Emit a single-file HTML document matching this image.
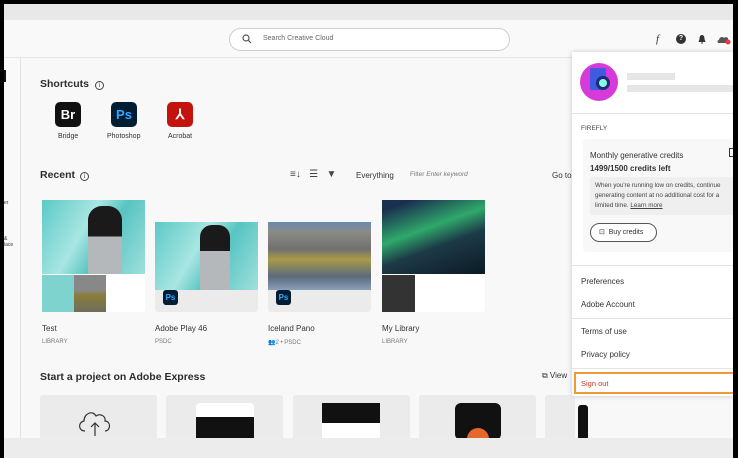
<!DOCTYPE html>
<html><head><meta charset="utf-8"><style>
*{margin:0;padding:0;box-sizing:border-box}
body{width:738px;height:458px;overflow:hidden;background:#000;font-family:"Liberation Sans",sans-serif;position:relative;color:#2c2c2c}
.abs{position:absolute}
.t{font-size:8px;color:#333}
.s{font-size:6px;color:#777}
.h{font-size:10.5px;font-weight:bold;color:#2c2c2c}
.ic{width:26px;height:25px;border-radius:5px;color:#fff;font-weight:bold;font-size:13px;text-align:center;line-height:25px}
.card{background:#ebebeb;border-radius:3px}
.menu{font-size:8px;color:#333}
</style></head><body>
<div class="abs" style="left:4px;top:4px;width:729px;height:454px;background:#f8f8f8"></div>
<div class="abs" style="left:4px;top:4px;width:729px;height:16px;background:#e8e8e8"></div>
<div class="abs" style="left:4px;top:20px;width:729px;height:38px;background:#f9f9f9;border-bottom:1px solid #e6e6e6"></div>
<div class="abs" style="left:4px;top:58px;width:17px;height:380px;background:#f9f9f9;border-right:1px solid #e3e3e3"></div>
<div class="abs" style="left:4px;top:70px;width:2px;height:12px;background:#111"></div>
<div class="abs" style="left:4px;top:200px;font-size:5px;color:#333">er</div>
<div class="abs" style="left:4px;top:236px;font-size:5px;color:#333">&amp;<br>lace</div>
<!-- search -->
<div class="abs" style="left:229px;top:28px;width:281px;height:23px;border:1px solid #cfcfcf;border-radius:12px;background:#fff"></div>
<svg class="abs" style="left:242px;top:34px" width="10" height="10"><circle cx="4" cy="4" r="3" stroke="#555" fill="none" stroke-width="1.2"/><line x1="6.3" y1="6.3" x2="9" y2="9" stroke="#555" stroke-width="1.2"/></svg>
<div class="abs" style="left:263px;top:35px;font-size:7px;color:#666">Search Creative Cloud</div>
<!-- top right icons -->
<div class="abs" style="left:656px;top:33px;font-size:11px;font-style:italic;font-family:'Liberation Serif',serif;color:#333">f</div>
<div class="abs" style="left:676px;top:34px;width:10px;height:10px;border-radius:50%;background:#333;color:#fff;font-size:7px;font-weight:bold;text-align:center;line-height:10px">?</div>
<svg class="abs" style="left:697px;top:34px" width="10" height="10"><path d="M5 1C3 1 2.5 3 2.5 5L1.5 8H8.5L7.5 5C7.5 3 7 1 5 1Z M4 8.5h2v1h-2z" fill="#333"/></svg>
<svg class="abs" style="left:716px;top:33px" width="16" height="12"><path d="M3 10C1 10 1 7 3 7C3 4 7 3 8 5C10 3 13 5 12 7C14 7 14 10 12 10Z" fill="#555"/><circle cx="12" cy="9" r="2.5" fill="#e34"/></svg>
<!-- shortcuts -->
<div class="abs h" style="left:40px;top:78px">Shortcuts <span style="font-weight:normal;border:1px solid #444;border-radius:50%;font-size:6px;display:inline-block;width:9px;height:9px;text-align:center;line-height:8px;margin-left:3px">i</span></div>
<div class="abs ic" style="left:55px;top:102px;background:#111">Br</div>
<div class="abs ic" style="left:111px;top:102px;background:#001d34;color:#31a8ff">Ps</div>
<div class="abs ic" style="left:167px;top:102px;background:#c4120c;font-size:14px">⅄</div>
<div class="abs t" style="left:58px;top:133px;font-size:7px">Bridge</div>
<div class="abs t" style="left:107px;top:133px;font-size:7px">Photoshop</div>
<div class="abs t" style="left:168px;top:133px;font-size:7px">Acrobat</div>
<!-- recent -->
<div class="abs h" style="left:40px;top:169px">Recent <span style="font-weight:normal;border:1px solid #444;border-radius:50%;font-size:6px;display:inline-block;width:9px;height:9px;text-align:center;line-height:8px;margin-left:2px">i</span></div>
<div class="abs" style="left:290px;top:169px;font-size:10px;color:#444">≡↓&nbsp;&nbsp;&nbsp;☰&nbsp;&nbsp;&nbsp;▼</div>
<div class="abs t" style="left:356px;top:171px">Everything</div>
<div class="abs" style="left:410px;top:171px;font-size:6.5px;color:#777">Filter <i>Enter keyword</i></div>
<div class="abs t" style="left:552px;top:171px">Go to</div>
<!-- cards -->
<div class="abs card" style="left:42px;top:200px;width:103px;height:112px;background:#fff"></div>
<div class="abs" style="left:42px;top:200px;width:103px;height:74px;background:linear-gradient(120deg,#5cc9c6,#a8e6e2 40%,#58c4c2 60%,#9fe0dc)"></div>
<div class="abs" style="left:88px;top:206px;width:34px;height:68px;border-radius:14px 14px 2px 2px;background:linear-gradient(#1a1a1a 45%,#b5b8bb 45%)"></div>
<div class="abs" style="left:42px;top:275px;width:32px;height:37px;background:#7fd3cf"></div>
<div class="abs" style="left:74px;top:275px;width:32px;height:37px;background:linear-gradient(#888 40%,#8a7d3a 55%,#6e6e5e)"></div>
<div class="abs card" style="left:155px;top:222px;width:103px;height:90px"></div>
<div class="abs" style="left:155px;top:222px;width:103px;height:68px;background:linear-gradient(120deg,#5cc9c6,#a8e6e2 40%,#58c4c2 60%,#9fe0dc)"></div>
<div class="abs" style="left:200px;top:225px;width:30px;height:65px;border-radius:12px 12px 2px 2px;background:linear-gradient(#1a1a1a 40%,#b5b8bb 40%)"></div>
<div class="abs" style="left:163px;top:290px;width:15px;height:15px;border-radius:3px;background:#001d34;color:#31a8ff;font-size:8px;font-weight:bold;text-align:center;line-height:15px">Ps</div>
<div class="abs card" style="left:268px;top:222px;width:103px;height:90px"></div>
<div class="abs" style="left:268px;top:222px;width:103px;height:68px;background:linear-gradient(#6b8ab0 0%,#8a8a85 15%,#707070 40%,#a99a4a 55%,#5a6a7a 80%,#8aa0b8)"></div>
<div class="abs" style="left:276px;top:290px;width:15px;height:15px;border-radius:3px;background:#001d34;color:#31a8ff;font-size:8px;font-weight:bold;text-align:center;line-height:15px">Ps</div>
<div class="abs card" style="left:382px;top:200px;width:103px;height:112px;background:#fff"></div>
<div class="abs" style="left:382px;top:200px;width:103px;height:74px;background:linear-gradient(160deg,#1a3050 10%,#2fa86a 40%,#1d3a48 60%,#0b1a22)"></div>
<div class="abs" style="left:382px;top:275px;width:33px;height:37px;background:#333"></div>
<div class="abs t" style="left:42px;top:324px">Test</div><div class="abs s" style="left:42px;top:339px">LIBRARY</div>
<div class="abs t" style="left:155px;top:324px">Adobe Play 46</div><div class="abs s" style="left:155px;top:339px">PSDC</div>
<div class="abs t" style="left:268px;top:324px">Iceland Pano</div><div class="abs s" style="left:268px;top:339px">👥2 • PSDC</div>
<div class="abs t" style="left:382px;top:324px">My Library</div><div class="abs s" style="left:382px;top:339px">LIBRARY</div>
<!-- express -->
<div class="abs h" style="left:40px;top:371px">Start a project on Adobe Express</div>
<div class="abs t" style="left:542px;top:371px">⧉ View</div>
<div class="abs card" style="left:40px;top:395px;width:117px;height:45px"></div>
<div class="abs card" style="left:166px;top:395px;width:117px;height:45px"></div>
<div class="abs card" style="left:293px;top:395px;width:117px;height:45px"></div>
<div class="abs card" style="left:419px;top:395px;width:117px;height:45px"></div>
<div class="abs card" style="left:545px;top:395px;width:30px;height:45px"></div>
<svg class="abs" style="left:75px;top:405px" width="40" height="33"><path d="M10 26C3 26 3 17 9 16C9 8 18 5 21 11C25 8 31 11 30 16C36 16 36 26 30 26" fill="none" stroke="#333" stroke-width="1.2"/><path d="M20 31V18M16 22L20 18L24 22" fill="none" stroke="#333" stroke-width="1.2"/></svg>
<div class="abs" style="left:196px;top:403px;width:58px;height:37px;background:#fff;border-radius:4px"></div>
<div class="abs" style="left:196px;top:417px;width:58px;height:23px;background:#111"></div>
<div class="abs" style="left:322px;top:403px;width:58px;height:37px;background:#fff"></div>
<div class="abs" style="left:322px;top:403px;width:58px;height:20px;background:#111"></div>
<div class="abs" style="left:455px;top:403px;width:46px;height:37px;background:#111;border-radius:6px"></div>
<div class="abs" style="left:467px;top:428px;width:22px;height:12px;border-radius:11px 11px 0 0;background:#e5672e"></div>
<div class="abs" style="left:578px;top:405px;width:10px;height:35px;background:#111;border-radius:3px"></div>
<!-- bottom band -->
<div class="abs" style="left:4px;top:438px;width:729px;height:20px;background:#ececec"></div>
<!-- popup -->
<div class="abs" style="left:572px;top:52px;width:161px;height:344px;background:#fff;box-shadow:0 0 5px rgba(0,0,0,.2)"></div>
<div class="abs" style="left:580px;top:63px;width:38px;height:38px;border-radius:50%;background:#d63ad8"></div>
<div class="abs" style="left:590px;top:68px;width:16px;height:22px;background:#3f5be0;border-radius:2px"></div>
<div class="abs" style="left:596px;top:76px;width:14px;height:14px;border-radius:50%;border:3px solid #1d2b7a;background:#8fd"></div>
<div class="abs" style="left:627px;top:73px;width:48px;height:7px;background:#e6e6e6"></div>
<div class="abs" style="left:627px;top:85px;width:106px;height:7px;background:#e6e6e6"></div>
<div class="abs" style="left:572px;top:113px;width:161px;height:1px;background:#e5e5e5"></div>
<div class="abs" style="left:581px;top:125px;font-size:6.5px;color:#444">FIREFLY</div>
<div class="abs" style="left:583px;top:139px;width:150px;height:113px;background:#f8f8f8;border-radius:4px"></div>
<div class="abs" style="left:729px;top:148px;width:6px;height:9px;border:1px solid #333"></div>
<div class="abs" style="left:590px;top:151px;font-size:8px;color:#333">Monthly generative credits</div>
<div class="abs" style="left:590px;top:164px;font-size:8px;font-weight:bold;color:#333">1499/1500 credits left</div>
<div class="abs" style="left:590px;top:177px;width:143px;height:38px;background:#efefef"></div>
<div class="abs" style="left:595px;top:181px;font-size:6.3px;line-height:10px;color:#444;width:138px">When you're running low on credits, continue generating content at no additional cost for a limited time. <u>Learn more</u></div>
<div class="abs" style="left:590px;top:223px;width:67px;height:19px;border:1px solid #555;border-radius:10px;background:#fff;font-size:7px;color:#333;line-height:17px;padding-left:8px">⊡&nbsp; Buy credits</div>
<div class="abs" style="left:572px;top:265px;width:161px;height:1px;background:#e5e5e5"></div>
<div class="abs menu" style="left:581px;top:277px">Preferences</div>
<div class="abs menu" style="left:581px;top:300px">Adobe Account</div>
<div class="abs" style="left:572px;top:318px;width:161px;height:1px;background:#e5e5e5"></div>
<div class="abs menu" style="left:581px;top:327px">Terms of use</div>
<div class="abs menu" style="left:581px;top:350px">Privacy policy</div>
<div class="abs" style="left:572px;top:368px;width:161px;height:1px;background:#e5e5e5"></div>
<div class="abs" style="left:574px;top:372px;width:161px;height:22px;border:2px solid #ef9a33"></div>
<div class="abs menu" style="left:581px;top:379px;color:#c23a1e;font-size:7.5px">Sign out</div>
<!-- borders -->
<div class="abs" style="left:0;top:0;width:738px;height:4px;background:#000"></div>
<div class="abs" style="left:0;top:0;width:4px;height:458px;background:#000"></div>
<div class="abs" style="left:733px;top:0;width:5px;height:458px;background:#000"></div>
</body></html>
